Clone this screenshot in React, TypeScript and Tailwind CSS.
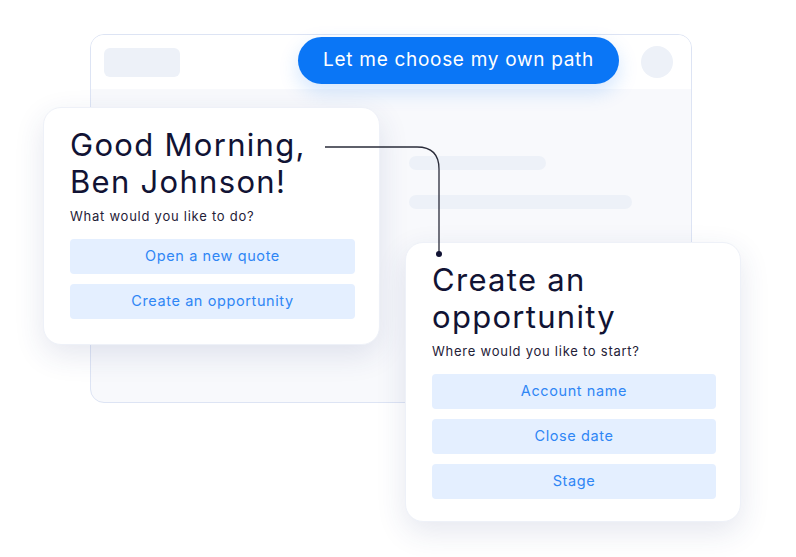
import React from 'react';

const font = { fontFamily: '"Inter", "Noto Sans", sans-serif' };

function ChoiceButton({ label }: { label: string }) {
  return (
    <div className="h-[35px] w-full rounded-[4px] bg-[#e4efff] flex items-center justify-center text-[14.5px] tracking-[0.6px] text-[#2f86f5]">
      {label}
    </div>
  );
}

function PromptCard({
  title,
  question,
  options,
  className,
}: {
  title: string[];
  question: string;
  options: string[];
  className: string;
}) {
  return (
    <div
      className={
        'absolute bg-white rounded-[18px] border border-[#eef1f8] shadow-[0_10px_30px_rgba(40,60,120,0.12)] pl-[26px] pr-[24px] pt-[18px] ' +
        className
      }
    >
      <h2 className="text-[31px] leading-[37px] text-[#111334] font-normal tracking-[1.3px]">
        {title.map((line) => (
          <div key={line}>{line}</div>
        ))}
      </h2>
      <p className="mt-[7px] text-[13px] tracking-[0.75px] text-[#1f2137]">{question}</p>
      <div className="mt-[12px] flex flex-col gap-[10px]">
        {options.map((o) => (
          <ChoiceButton key={o} label={o} />
        ))}
      </div>
    </div>
  );
}

export default function App() {
  return (
    <div className="relative w-[796px] h-[557px] bg-white overflow-hidden" style={font}>
      {/* app window behind the cards */}
      <div className="absolute left-[90px] top-[34px] w-[602px] h-[369px] rounded-[14px] border border-[#dde4f4] bg-[#f8f9fc] overflow-hidden flex flex-col">
        <div className="h-[54px] bg-white flex items-center justify-between pl-[13px] pr-[18px] shrink-0">
          <div className="w-[76px] h-[29px] rounded-[6px] bg-[#edf1f8]" />
          <div className="w-[32px] h-[32px] rounded-full bg-[#edf1f8]" />
        </div>
        <div className="flex flex-col gap-[25px] pl-[318px] pt-[67px]">
          <div className="w-[137px] h-[14px] rounded-full bg-[#edf1f8]" />
          <div className="w-[223px] h-[14px] rounded-full bg-[#edf1f8]" />
        </div>
      </div>

      {/* chat bubble */}
      <div className="absolute left-[298px] top-[37px] w-[321px] h-[47px] rounded-full bg-[#0a76f6] shadow-[0_8px_20px_rgba(10,118,246,0.18)] flex items-center justify-center text-white text-[19px] tracking-[0.7px]">
        Let me choose my own path
      </div>

      <PromptCard
        className="left-[43px] top-[107px] w-[337px] h-[238px]"
        title={['Good Morning,', 'Ben Johnson!']}
        question="What would you like to do?"
        options={['Open a new quote', 'Create an opportunity']}
      />

      <PromptCard
        className="left-[405px] top-[242px] w-[336px] h-[280px]"
        title={['Create an', 'opportunity']}
        question="Where would you like to start?"
        options={['Account name', 'Close date', 'Stage']}
      />

      {/* connector between the two cards */}
      <svg className="absolute left-[320px] top-[140px]" width="130" height="125" viewBox="0 0 130 125">
        <path d="M5 7 H97 Q119 7 119 29 V114" fill="none" stroke="#2a2c3a" strokeWidth="1.3" />
        <circle cx="119" cy="114" r="3" fill="#111334" />
      </svg>
    </div>
  );
}
